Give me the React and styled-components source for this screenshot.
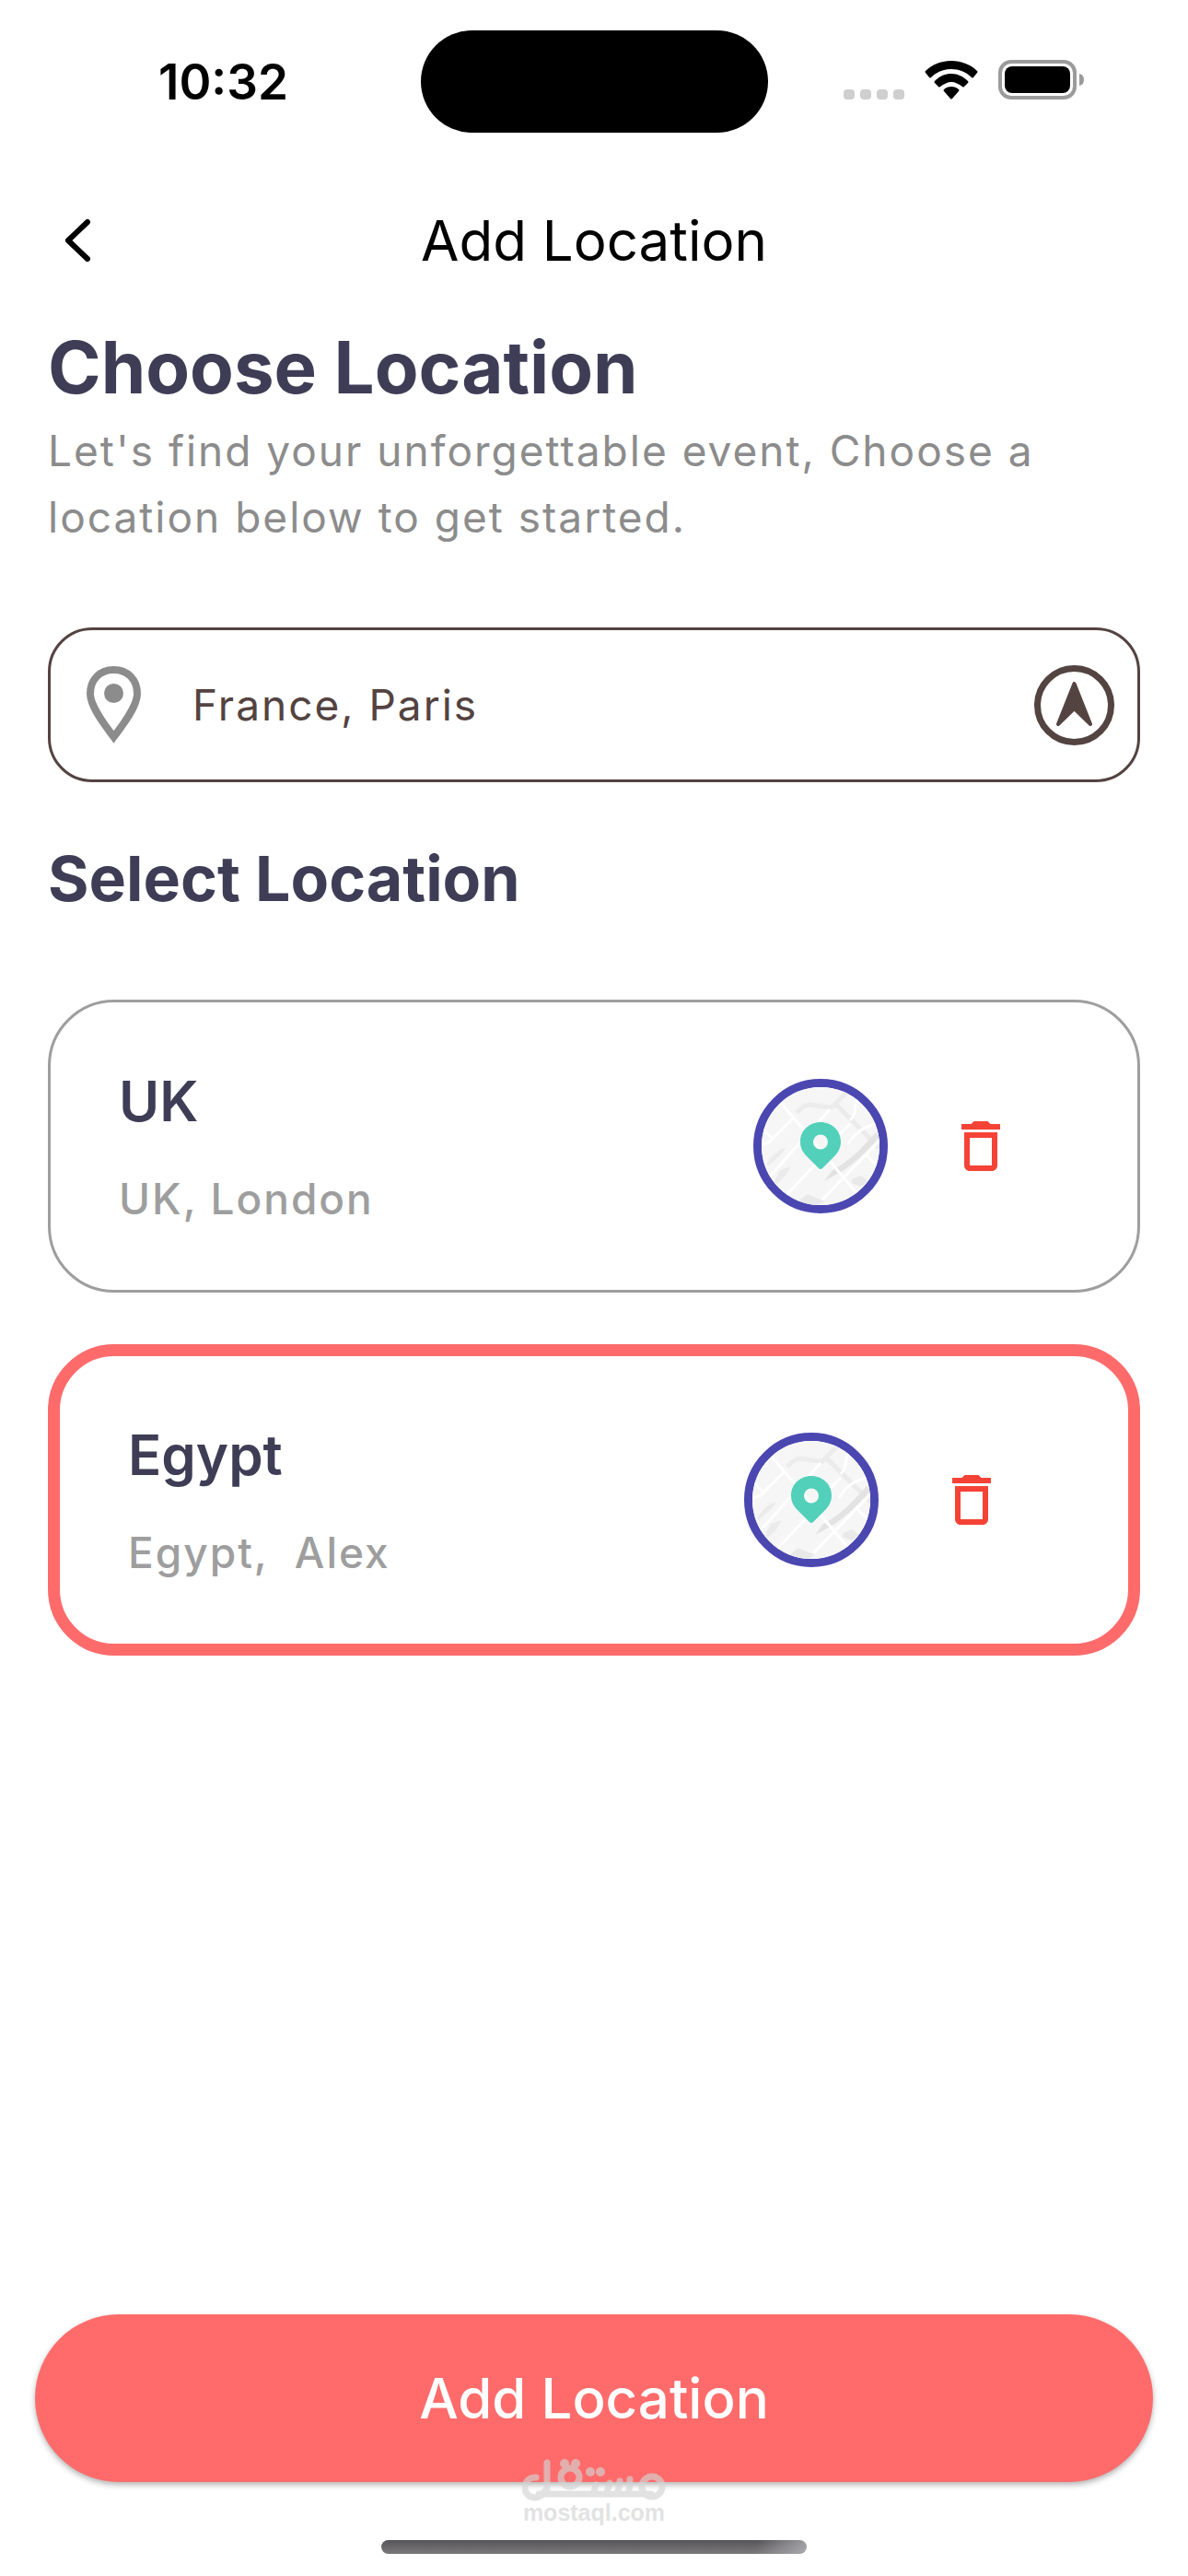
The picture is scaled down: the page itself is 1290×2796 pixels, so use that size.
import { useState } from "react";
import styled, { createGlobalStyle } from "styled-components";
import { MdDeleteOutline } from "react-icons/md";

const GlobalStyle = createGlobalStyle`
  * {
    box-sizing: border-box;
  }
  body {
    margin: 0;
    background-color: #ffffff;
    font-family: Inter, "Liberation Sans", sans-serif;
  }
`;

const Screen = styled.div`
  display: flex;
  flex-direction: column;
  min-height: 100vh;
`;

const StatusBar = styled.div`
  display: grid;
  grid-template-columns: 1fr auto 1fr;
  align-items: center;
  padding: 33px 113px 0 172px;
`;
const Time = styled.time`
  font-size: 53px;
  font-weight: 600;
  line-height: 60px;
`;
const Island = styled.div`
  width: 377px;
  height: 111px;
  margin-right: 59px;
  border-radius: 56px;
  background-color: #000000;
`;
const StatusIcons = styled.div`
  display: flex;
  justify-content: flex-end;
  align-items: center;
  gap: 22px;
  padding-bottom: 4px;
`;

const TopBar = styled.header`
  display: grid;
  grid-template-columns: 144px 1fr 144px;
  align-items: center;
  padding: 33px 12px 0;
  height: 200px;
`;
const IconButton = styled.button`
  display: flex;
  justify-content: center;
  align-items: center;
  width: 144px;
  height: 144px;
  padding: 0;
  border: none;
  background: none;
  color: ${({ $color }) => $color || "#000000"};
  cursor: pointer;
`;
const PageTitle = styled.h1`
  margin: 0;
  font-size: 60px;
  font-weight: 400;
  line-height: 76px;
  text-align: center;
`;

const Main = styled.main`
  display: flex;
  flex-direction: column;
  flex: 1;
  padding: 7px 52px 0;
`;
const Heading = styled.h2`
  margin: 0;
  font-size: 78px;
  font-weight: 700;
  line-height: 96px;
  color: #3f3d56;
`;
const SubHeading = styled.h3`
  margin: 62px 0 90px;
  font-size: 68px;
  font-weight: 700;
  line-height: 84px;
  color: #3f3d56;
`;
const Intro = styled.p`
  margin: 6px 0 84px;
  font-size: 46px;
  line-height: 72px;
  letter-spacing: 2px;
  color: #8c8c8c;
`;

const SearchBox = styled.div`
  display: flex;
  align-items: center;
  height: 168px;
  padding: 0 25px 0 39px;
  border: 3px solid #534341;
  border-radius: 48px;
`;
const SearchInput = styled.input`
  flex: 1;
  min-width: 0;
  margin-left: 56px;
  padding: 0;
  border: none;
  outline: none;
  background: none;
  font-family: inherit;
  font-size: 46px;
  letter-spacing: 2px;
  color: #534341;
`;
const LocateButton = styled.button`
  display: flex;
  padding: 0;
  border: none;
  background: none;
  cursor: pointer;
`;

const List = styled.ul`
  display: flex;
  flex-direction: column;
  gap: 56px;
  margin: 0;
  padding: 0;
  list-style: none;
`;
const Card = styled.li`
  display: flex;
  align-items: center;
  gap: 29px;
  padding: 69px 98px 69px 74px;
  border: ${({ $active }) =>
    $active ? "13px solid #ff6b6b" : "3px solid #9e9e9e"};
  border-radius: 72px;
`;
const Place = styled.div`
  display: flex;
  flex-direction: column;
  flex: 1;
  gap: 38px;
`;
const Country = styled.h4`
  margin: 0;
  font-size: 60px;
  font-weight: 600;
  line-height: 76px;
  color: #3f3d56;
`;
const City = styled.p`
  margin: 0;
  font-size: 46px;
  font-weight: 500;
  line-height: 60px;
  letter-spacing: 2px;
  white-space: pre-wrap;
  color: #9e9e9e;
`;
const MapBadge = styled.div`
  width: 146px;
  height: 146px;
  border: 9px solid #4b47b1;
  border-radius: 50%;
  overflow: hidden;
`;

const Footer = styled.footer`
  display: flex;
  flex-direction: column;
  align-items: center;
  gap: 63px;
  padding: 0 38px 24px;
`;
const ButtonArea = styled.div`
  position: relative;
  width: 100%;
`;
const SubmitButton = styled.button`
  display: block;
  width: 100%;
  height: 182px;
  border: none;
  border-radius: 91px;
  background-color: #ff6b6b;
  box-shadow: 0 3px 6px rgba(0, 0, 0, 0.3);
  font-family: inherit;
  font-size: 60px;
  font-weight: 500;
  color: #ffffff;
  cursor: pointer;
`;
const Watermark = styled.div`
  position: absolute;
  top: 157px;
  left: 50%;
  display: flex;
  flex-direction: column;
  align-items: center;
  transform: translateX(-50%);
  opacity: 0.65;
  pointer-events: none;
  font-family: "Liberation Sans", sans-serif;
  font-size: 25px;
  font-weight: 700;
  line-height: 24px;
  color: #d4d4d4;
`;
const HomeIndicator = styled.div`
  width: 462px;
  height: 15px;
  border-radius: 8px;
  background:
    linear-gradient(100deg, transparent 88%, rgba(190, 190, 195, 0.7)),
    linear-gradient(#555557, #7c797c);
`;

const StatusGlyphs = () => (
  <StatusIcons>
    <svg width="66" height="42" viewBox="0 0 66 42" fill="#cfcfd0">
      <rect x="0" y="31" width="12" height="11" rx="4" />
      <rect x="18" y="31" width="12" height="11" rx="4" />
      <rect x="36" y="31" width="12" height="11" rx="4" />
      <rect x="54" y="31" width="12" height="11" rx="4" />
    </svg>
    <svg width="58" height="42" viewBox="0 0 58 42">
      <path d="M29 0C40 0 50 4 57 11Q58 12 57 13L53 18Q52 19 51 18C45 12 37 9 29 9S13 12 7 18Q6 19 5 18L1 13Q0 12 1 11C8 4 18 0 29 0Z" />
      <path d="M29 14C36 14 42 17 47 22Q48 23 47 24L43 28Q42 29 41 28C37 25 33 23 29 23S21 25 17 28Q16 29 15 28L11 24Q10 23 11 22C16 17 22 14 29 14Z" />
      <path d="M29 28C32 28 35 29 37 31Q38 32 37 33L30 41Q29 42 28 41L21 33Q20 32 21 31C23 29 26 28 29 28Z" />
    </svg>
    <svg width="93" height="43" viewBox="0 0 93 43">
      <rect
        x="2"
        y="2"
        width="81"
        height="39"
        rx="12"
        fill="none"
        stroke="#9b9b9b"
        strokeWidth="4"
      />
      <rect x="7" y="7" width="71" height="29" rx="8" />
      <path d="M88 15Q93 16 93 21.500T88 28Z" fill="#9b9b9b" />
    </svg>
  </StatusIcons>
);

const BackIcon = () => (
  <svg width="32" height="50" viewBox="0 0 32 50" fill="none">
    <path
      d="M27 5L6 25L27 45"
      stroke="currentColor"
      strokeWidth="6"
      strokeLinecap="round"
      strokeLinejoin="round"
    />
  </svg>
);

const PinIcon = () => (
  <svg width="59" height="84" viewBox="0 0 59 84" fill="none">
    <path
      d="M29.500 77C23 68 4 45 4 30C4 14 15 4 29.500 4S55 14 55 30C55 45 36 68 29.500 77Z"
      stroke="#8c8c8c"
      strokeWidth="8"
    />
    <circle cx="29.500" cy="29.500" r="10.500" fill="#8c8c8c" />
  </svg>
);

const LocateIcon = () => (
  <svg width="87" height="87" viewBox="0 0 87 87" fill="none">
    <circle cx="43.500" cy="43.500" r="40" stroke="#534341" strokeWidth="7" />
    <path
      d="M43.500 20L61 64L43.500 47L26 64Z"
      fill="#534341"
      stroke="#534341"
      strokeWidth="4"
      strokeLinejoin="round"
    />
  </svg>
);

const MapPicture = () => (
  <svg width="128" height="128" viewBox="0 0 128 128" fill="none">
    <rect width="128" height="128" fill="#f6f6f6" />
    <path d="M38 28Q48 16 58 20Q70 22 76 22L94 4" stroke="#ececec" strokeWidth="5" />
    <path d="M80 18L128 66" stroke="#ebebeb" strokeWidth="5" />
    <path d="M68 102L76 91Q98 78 112 62L124 49L128 54Q108 78 88 91Z" fill="#e3e3e3" />
    <path d="M6 82Q16 68 26 66Q22 74 6 86Z" fill="#ebebeb" />
    <path d="M14 102L20 90L32 86L26 96L16 106Z" fill="#ebebeb" />
    <path d="M98 100L108 96L116 102L108 108L98 104Z" fill="#e9e9e9" />
    <path d="M42 122L50 116L68 124L60 128H44Z" fill="#e9e9e9" />
    <g stroke="#ffffff" strokeWidth="3">
      <path d="M20 16L104 116" />
      <path d="M34 34L8 60L0 62" />
      <path d="M0 44L12 56" />
      <path d="M74 24L8 98" />
      <path d="M62 80L26 118" />
      <path d="M66 122L128 58" />
      <path d="M96 36Q102 30 102 18L106 12" />
      <path d="M94 62Q104 44 124 40" />
      <path d="M96 40L82 54" />
      <path d="M114 74L126 86" />
    </g>
    <path
      fillRule="evenodd"
      d="M64 38C76 38 86 47 86 59C86 66 83 71 79 75L66 88Q64 90 62 88L49 75C45 71 42 66 42 59C42 47 52 38 64 38ZM64 51.500A8 8 0 1 0 64 67.500A8 8 0 1 0 64 51.500Z"
      fill="#52d0ba"
    />
  </svg>
);

const WatermarkLogo = () => (
  <svg width="156" height="46" viewBox="0 0 156 46" fill="none">
    <g stroke="#d4d4d4" strokeWidth="7" strokeLinecap="round">
      <path d="M15 20A11 11 0 1 0 24 35" />
      <path d="M27 4V35" />
      <path d="M18 38H140" />
      <circle cx="52" cy="20" r="10" />
      <path d="M80 28L78 36M95 26L92 36M106 24L104 36M117 22L116 36" />
      <circle cx="141" cy="30" r="11" />
    </g>
    <g fill="#d4d4d4">
      <circle cx="46" cy="5" r="5" />
      <circle cx="58" cy="5" r="5" />
      <circle cx="74" cy="14" r="5" />
      <circle cx="85" cy="14" r="5" />
    </g>
  </svg>
);

const locations = [
  { country: "UK", city: "UK, London" },
  { country: "Egypt", city: "Egypt,  Alex" },
];

const LocationCard = ({ country, city, active, onSelect }) => {
  return (
    <Card $active={active} onClick={onSelect}>
      <Place>
        <Country>{country}</Country>
        <City>{city}</City>
      </Place>
      <MapBadge>
        <MapPicture />
      </MapBadge>
      <IconButton type="button" $color="#f44336" aria-label={`Delete ${country}`}>
        <MdDeleteOutline size={72} />
      </IconButton>
    </Card>
  );
};

const App = () => {
  const [selected, setSelected] = useState("Egypt");
  const [search, setSearch] = useState("France, Paris");

  return (
    <>
      <GlobalStyle />
      <Screen>
        <StatusBar>
          <Time>10:32</Time>
          <Island />
          <StatusGlyphs />
        </StatusBar>
        <TopBar>
          <IconButton type="button" aria-label="Back">
            <BackIcon />
          </IconButton>
          <PageTitle>Add Location</PageTitle>
        </TopBar>
        <Main>
          <Heading>Choose Location</Heading>
          <Intro>
            Let's find your unforgettable event, Choose a location below to get
            started.
          </Intro>
          <SearchBox>
            <PinIcon />
            <SearchInput
              type="text"
              aria-label="Location"
              value={search}
              onChange={(e) => setSearch(e.target.value)}
            />
            <LocateButton type="button" aria-label="Use current location">
              <LocateIcon />
            </LocateButton>
          </SearchBox>
          <SubHeading>Select Location</SubHeading>
          <List>
            {locations.map(({ country, city }) => (
              <LocationCard
                key={country}
                country={country}
                city={city}
                active={country === selected}
                onSelect={() => setSelected(country)}
              />
            ))}
          </List>
        </Main>
        <Footer>
          <ButtonArea>
            <SubmitButton type="button">Add Location</SubmitButton>
            <Watermark>
              <WatermarkLogo />
              mostaql.com
            </Watermark>
          </ButtonArea>
          <HomeIndicator />
        </Footer>
      </Screen>
    </>
  );
};

export default App;
